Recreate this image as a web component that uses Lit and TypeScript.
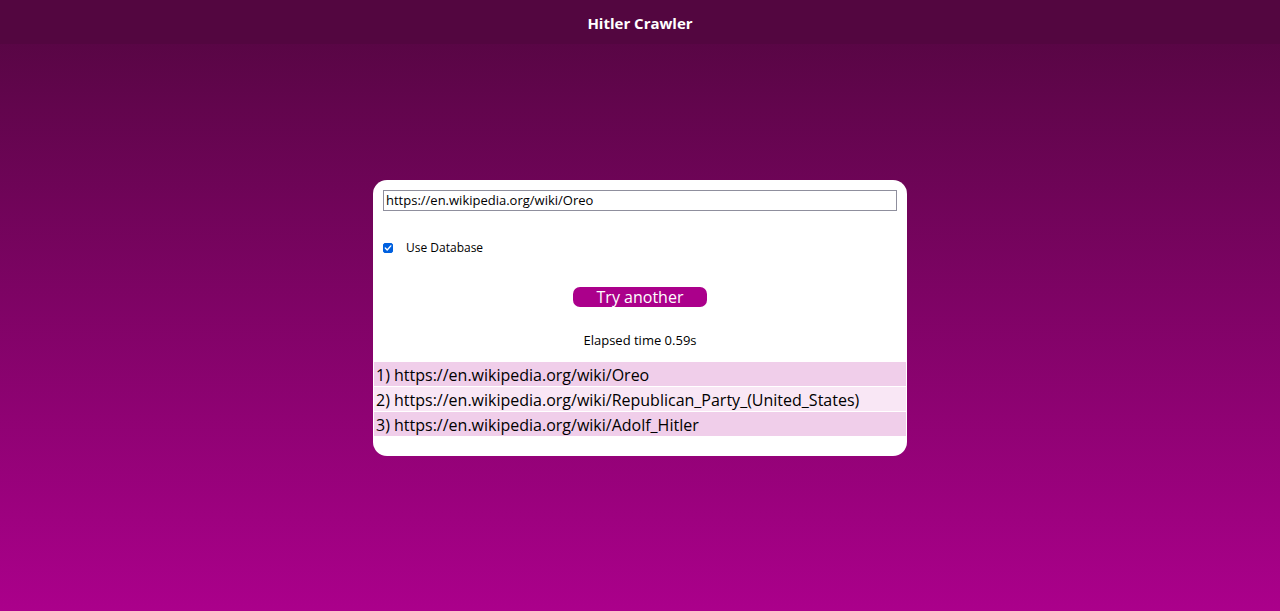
import { LitElement, html, css } from "lit";
import { customElement, state } from "lit/decorators.js";

@customElement("app-root")
export class AppRoot extends LitElement {
  static styles = css`
    :host {
      display: flex;
      flex-direction: column;
      min-height: 100vh;
      box-sizing: border-box;
      font-family: "Segoe UI", "Open Sans", "Noto Sans", sans-serif;
      color: #000;
      background: linear-gradient(to bottom, #530640, #ab008b);
    }
    .header {
      background: #530640;
      padding: 12px 16px 10px;
      text-align: center;
    }
    .title {
      margin: 0;
      font-size: 15px;
      line-height: 22px;
      font-weight: 700;
      color: #fff;
    }
    .main {
      flex: 1;
      display: flex;
      align-items: center;
      justify-content: center;
      padding: 0 16px 20px;
    }
    .card {
      width: 100%;
      max-width: 534px;
      box-sizing: border-box;
      padding-bottom: 20px;
      border-radius: 14px;
      background: #fff;
      overflow: hidden;
    }
    .form {
      display: flex;
      flex-direction: column;
      padding: 10px 10px 0;
    }
    .url {
      box-sizing: border-box;
      width: 100%;
      height: 21px;
      margin: 0;
      padding: 0 2px;
      border: 1px solid #8f8f9d;
      border-radius: 0;
      background: #fff;
      color: #000;
      font-family: Tahoma, "Open Sans", "Noto Sans", sans-serif;
      font-size: 13px;
    }
    .option {
      display: flex;
      align-items: center;
      gap: 13px;
      margin: 28px 0 30px;
      font-size: 12px;
      line-height: 18px;
    }
    .check {
      appearance: none;
      width: 10px;
      height: 10px;
      margin: 0;
      border: 1px solid #8f8f9d;
      border-radius: 2px;
    }
    .check:checked {
      border-color: #0060df;
      background: #0060df
        url('data:image/svg+xml,<svg xmlns="http://www.w3.org/2000/svg" viewBox="0 0 8 8"><path d="M1.3 4.1 3.2 6 6.8 1.9" fill="none" stroke="white" stroke-width="1.4" stroke-linecap="round" stroke-linejoin="round"/></svg>')
        center / 8px 8px no-repeat;
    }
    .submit {
      align-self: center;
      width: 134px;
      height: 20px;
      padding: 0;
      border: 0;
      border-radius: 7px;
      background: #ab008b;
      color: #fff;
      font-family: Tahoma, "Open Sans", "Noto Sans", sans-serif;
      font-size: 16px;
      line-height: 20px;
      cursor: pointer;
    }
    .elapsed {
      margin: 23px 0 12px;
      text-align: center;
      font-size: 13px;
      line-height: 20px;
    }
    .results {
      display: flex;
      flex-direction: column;
      gap: 1px;
      margin: 0;
      padding: 0 1px;
      list-style: none;
      font-size: 16px;
      line-height: 22px;
    }
    .result {
      padding: 2px 2px 0;
      overflow-wrap: anywhere;
      background: #f9e7f5;
    }
    .result:nth-child(odd) {
      background: #f0ceea;
    }
  `;

  @state() private address = "https://en.wikipedia.org/wiki/Oreo";
  @state() private useDatabase = true;
  @state() private elapsed = 0.59;
  @state() private path = [
    "https://en.wikipedia.org/wiki/Oreo",
    "https://en.wikipedia.org/wiki/Republican_Party_(United_States)",
    "https://en.wikipedia.org/wiki/Adolf_Hitler",
  ];

  render() {
    return html`
      <header class="header"><h1 class="title">Hitler Crawler</h1></header>
      <main class="main">
        <section class="card">
          <form class="form" @submit=${(e: Event) => e.preventDefault()}>
            <input
              class="url"
              type="text"
              aria-label="Wikipedia address"
              spellcheck="false"
              .value=${this.address}
              @input=${(e: Event) => (this.address = (e.target as HTMLInputElement).value)}
            />
            <label class="option">
              <input
                class="check"
                type="checkbox"
                .checked=${this.useDatabase}
                @change=${(e: Event) => (this.useDatabase = (e.target as HTMLInputElement).checked)}
              />
              <span>Use Database</span>
            </label>
            <button class="submit" type="submit">Try another</button>
          </form>
          <p class="elapsed">Elapsed time ${this.elapsed}s</p>
          <ol class="results">
            ${this.path.map((link, i) => html`<li class="result">${i + 1}) ${link}</li>`)}
          </ol>
        </section>
      </main>
    `;
  }
}
